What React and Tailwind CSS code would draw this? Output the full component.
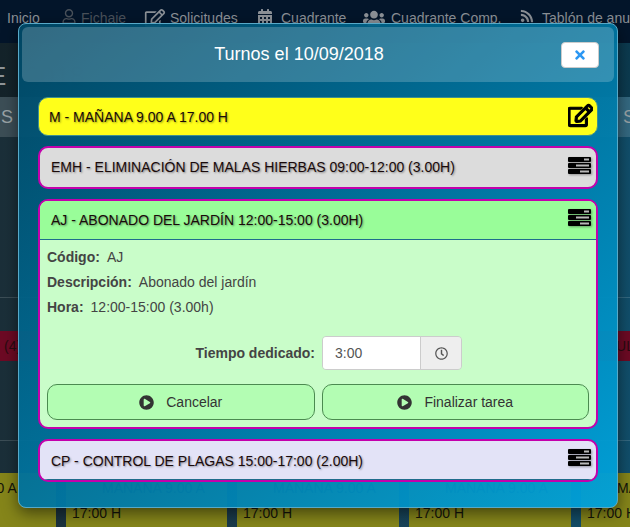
import React from 'react';
import { FaRegUser, FaRegEdit, FaCalendarAlt, FaUsers, FaRss, FaTimes, FaPlayCircle, FaRegClock } from 'react-icons/fa';

const NAV = [
  { label: 'Solicitudes', icon: FaRegEdit, iconClass: 'text-[18px] w-[26px] pr-[4px]', width: 'w-[111px]' },
  { label: 'Cuadrante', icon: FaCalendarAlt, iconClass: 'text-[16px] w-[26px] pr-[6px]', width: 'w-[108px]' },
  { label: 'Cuadrante Comp.', icon: FaUsers, iconClass: 'text-[19px] w-[28px] pr-[6px]', width: 'w-[155px]' },
  { label: 'Tablón de anuncios', icon: FaRss, iconClass: 'text-[14px] w-[24px] pr-[6px]', width: '' },
];

const DAY_CELLS = ['w-[178px] ml-[-122px]', 'w-[161px]', 'w-[162px]', 'w-[162px]', 'w-[162px]'];

const ServerIcon = () => (
  <svg width="23" height="18" viewBox="0 0 23 18" className="shrink-0 drop-shadow-[1px_1px_1px_rgba(0,0,0,0.35)]">
    <rect x="0" y="0" width="23" height="5" rx="1" fill="#000" />
    <rect x="16" y="1.5" width="5" height="2" fill="#b8b8b8" />
    <rect x="0" y="6" width="23" height="5" rx="1" fill="#000" />
    <rect x="8" y="7.5" width="13" height="2" fill="#b8b8b8" />
    <rect x="0" y="12" width="23" height="5" rx="1" fill="#000" />
    <rect x="12" y="13.5" width="9" height="2" fill="#b8b8b8" />
  </svg>
);

const titleClass = 'text-[14px] text-[#1a0a0a] [text-shadow:1px_1px_2px_rgba(0,0,0,0.4)]';

const Background = () => (
  <div className="flex flex-col h-full bg-gradient-to-r from-[#1b2f39] to-[#114f6b]">
    <nav className="h-[43px] shrink-0 bg-[#03152a] flex items-start pt-[8px] text-[14px] text-[#8b9096]">
      <span className="ml-[7px] w-[50px] shrink-0">Inicio</span>
      <span className="flex w-[87px] shrink-0 text-[#49515a]">
        <FaRegUser className="text-[15px] w-[24px] mt-[1px]" />
        Fichaje
      </span>
      {NAV.map(item => {
        const Icon = item.icon;
        return (
          <span key={item.label} className={`flex shrink-0 whitespace-nowrap ${item.width}`}>
            <Icon className={`${item.iconClass} mt-[1px] shrink-0`} />
            {item.label}
          </span>
        );
      })}
    </nav>
    <div className="h-[54px] shrink-0 bg-black/25 flex items-center gap-[19px] text-[26px] pt-[12px] -ml-[11px] text-[#8f9598]">
      <span>E</span>
      <span className="text-[#0d1a20] tracking-[0.5px]">2018</span>
    </div>
    <div className="h-[40px] shrink-0 bg-white/15 flex items-center justify-between pl-[1px] -mr-[5px] text-[18px] text-[#9aa3a6]">
      <span>S</span>
      <span>S</span>
    </div>
    <div className="h-[161px] shrink-0 border-b border-white/15" />
    <div className="h-[33px] shrink-0" />
    <div className="h-[30px] shrink-0 bg-[#6d0a24] flex items-center justify-between text-[14px] text-[#2a0a10] -mr-[4px]">
      <span className="ml-[4px]">(4)</span>
      <span>UL</span>
    </div>
    <div className="h-[80px] shrink-0 border-b border-white/15" />
    <div className="h-[32px] shrink-0" />
    <div className="flex-1 flex gap-[10px] text-[14px] text-[#14140a]">
      {DAY_CELLS.map((cls, i) => (
        <div key={i} className={`${cls} shrink-0 bg-[#85851a] pt-[5px] pl-[6px] whitespace-nowrap overflow-hidden`}>
          <div className="pl-[30px]">MAÑANA 9.00 A</div>
          <div className="mt-[4px]">17:00 H</div>
        </div>
      ))}
    </div>
  </div>
);

const CollapsedCard = ({ title, bg, line }) => (
  <div className={`rounded-[10px] border-2 border-[#c400ac] overflow-hidden ${bg}`}>
    <div className={`h-[39px] pl-[11px] pr-[5px] flex items-center justify-between ${line ? 'border-b border-[#1f6d8c]' : ''}`}>
      <span className={`${titleClass} ${line ? 'pt-[2px]' : ''}`}>{title}</span>
      <span className="mt-[-4px]"><ServerIcon /></span>
    </div>
  </div>
);

const ActionButton = ({ label }) => (
  <button className="flex-1 h-[36px] rounded-[10px] border border-[#4b8a50] bg-[#b3fdb3] flex items-center justify-center gap-[12px] pt-[1px] text-[14px] text-[#333] [font-family:inherit]">
    <FaPlayCircle className="text-[15px] text-[#333]" />
    {label}
  </button>
);

const Row = ({ label, value }) => (
  <div className="h-[25px] flex items-center gap-[7px] text-[14px] text-[#444]">
    <b>{label}</b>
    <span>{value}</span>
  </div>
);

export default function App() {
  return (
    <div className="relative w-[630px] h-[527px] overflow-hidden font-['Liberation_Sans',Arial,sans-serif]">
      <Background />

      {/* Modal */}
      <div className="absolute left-[18px] top-[23px] w-[600px] rounded-[8px] border border-[#57a9c8] p-[3px] bg-gradient-to-br from-[#004866f2] to-[#00a2dbf5] shadow-[0_5px_15px_rgba(0,0,0,0.5)]">
        <div className="h-[55px] rounded-[6px] bg-white/20 relative flex items-center justify-center pr-[38px]">
          <h4 className="text-[18px] text-white">Turnos el 10/09/2018</h4>
          <button className="absolute right-[15px] top-[15px] w-[38px] h-[26px] rounded-[4px] bg-white border border-[#ccc] flex items-center justify-center">
            <FaTimes className="text-[14px] text-[#2b97f3]" />
          </button>
        </div>

        <div className="pt-[15px] px-[16px] pb-[22px] flex flex-col gap-[10px]">
          <div className="h-[39px] rounded-[10px] border border-[#3f8f8f] bg-[#ffff1a] pl-[10px] pr-[4px] flex items-center justify-between">
            <span className={`${titleClass} pt-[2px]`}>M - MAÑANA 9.00 A 17.00 H</span>
            <FaRegEdit className="text-[25px] text-black mt-[-3px]" stroke="currentColor" strokeWidth={24} />
          </div>

          <CollapsedCard title="EMH - ELIMINACIÓN DE MALAS HIERBAS 09:00-12:00 (3.00H)" bg="bg-[#dcdcdc]" />

          <div className="rounded-[10px] border-2 border-[#c400ac] overflow-hidden bg-[#c9fdc9]">
            <div className="h-[39px] pl-[11px] pr-[5px] bg-[#99fd99] border-b border-[#1f6d8c] flex items-center justify-between">
              <span className={titleClass}>AJ - ABONADO DEL JARDÍN 12:00-15:00 (3.00H)</span>
              <span className="mt-[-4px]"><ServerIcon /></span>
            </div>
            <div className="px-[7px] pt-[5px] pb-[7px]">
              <Row label="Código:" value="AJ" />
              <Row label="Descripción:" value="Abonado del jardín" />
              <Row label="Hora:" value="12:00-15:00 (3.00h)" />
              <div className="mt-[16px] flex items-center">
                <b className="w-[268px] text-right text-[14px] text-[#444]">Tiempo dedicado:</b>
                <div className="ml-[7px] w-[140px] h-[34px] flex rounded-[4px] border border-[#ccc] overflow-hidden">
                  <div className="flex-1 bg-white pl-[12px] flex items-center text-[14px] text-[#555]">3:00</div>
                  <div className="w-[41px] bg-[#eee] border-l border-[#ccc] flex items-center justify-center">
                    <FaRegClock className="text-[13px] text-[#555]" />
                  </div>
                </div>
              </div>
              <div className="mt-[14px] flex gap-[7px]">
                <ActionButton label="Cancelar" />
                <ActionButton label="Finalizar tarea" />
              </div>
            </div>
          </div>

          <CollapsedCard title="CP - CONTROL DE PLAGAS 15:00-17:00 (2.00H)" bg="bg-[#e3e3f7]" line />
        </div>
      </div>
    </div>
  );
}
